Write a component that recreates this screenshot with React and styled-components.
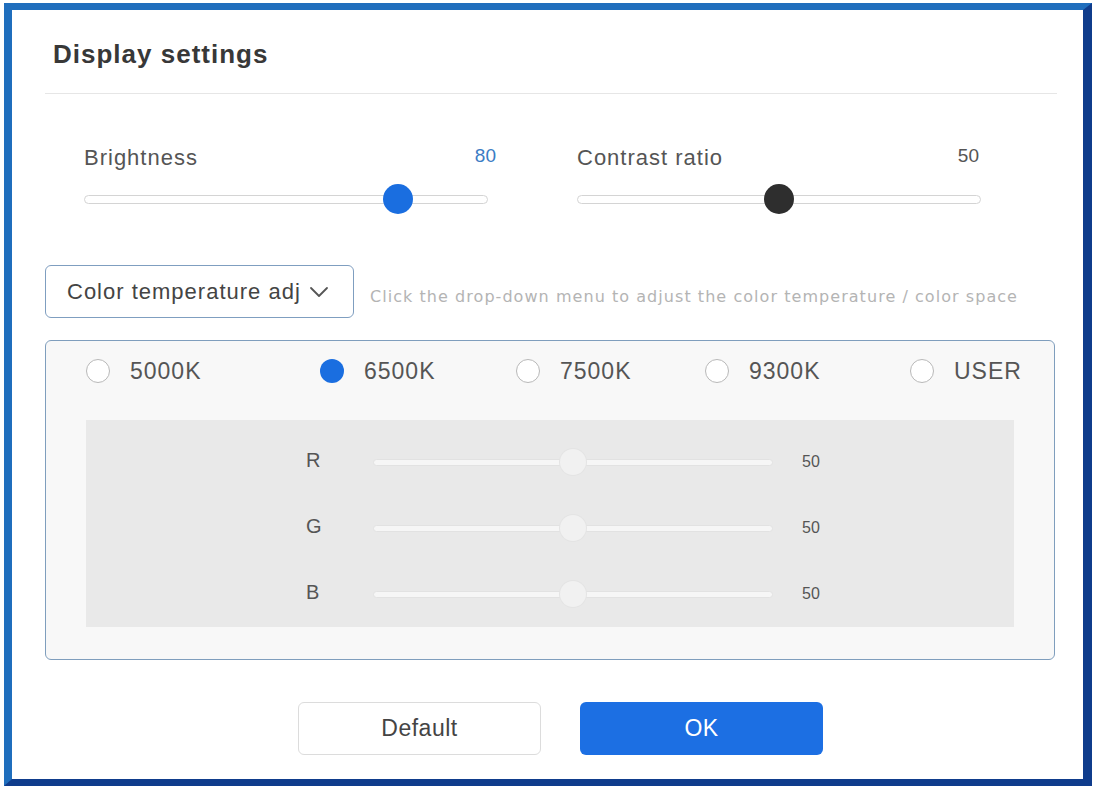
import styled, { createGlobalStyle } from 'styled-components';

const Global = createGlobalStyle`
  html, body {
    margin:0;
    padding:0;
    background:#fff;
  }
  body{
    font-family:"Liberation Sans", Arial, sans-serif;
    color:#555;
  }
`;

const Window = styled.div`
  box-sizing:border-box;
  width:1088px;
  height:783px;
  margin:3px 0 0 4px;
  border-style:solid;
  border-width:7px 9px 7px 8px;
  border-color:#1f6ebd #0f3c8c #0f3c8c #1f6ebd;
  background:#fff;
  padding:0 27px 0 33px;
  display:flex;
  flex-direction:column;
`;

const Header = styled.div`
  padding:29px 0 24px 8px;
  border-bottom:1px solid #e6e6e6;
  margin-right:-1px;
`;

const Title = styled.h1`
  margin:0;
  font-size:26px;
  line-height:30px;
  letter-spacing:1px;
  font-weight:700;
  color:#383838;
`;

const SliderRow = styled.div`
  display:grid;
  grid-template-columns:404px 404px;
  column-gap:89px;
  padding-left:39px;
  margin-top:51px;
`;

const SliderBlock = styled.div`
  display:flex;
  flex-direction:column;
  gap:13px;
`;

const LabelLine = styled.div`
  display:flex;
  justify-content:space-between;
  align-items:center;
  height:26px;
`;

const Label = styled.span`
  font-size:22px;
  letter-spacing:1px;
  color:#555;
`;

const Value = styled.span`
  font-size:19px;
  color:${(p) => p.color || '#555'};
  margin-top:-4px;
  margin-right:${(p) => p.offset || 0}px;
`;

const Track = styled.div`
  position:relative;
  height:${(p) => p.size}px;
  display:flex;
  align-items:center;
`;

const Rail = styled.div`
  box-sizing:border-box;
  width:100%;
  height:${(p) => p.thick}px;
  border-radius:${(p) => p.thick / 2}px;
  background:${(p) => p.bg};
  border:1px solid ${(p) => p.line};
`;

const Thumb = styled.div`
  position:absolute;
  top:0;
  width:${(p) => p.size}px;
  height:${(p) => p.size}px;
  border-radius:50%;
  background:${(p) => p.color};
  box-shadow:${(p) => p.shadow || 'none'};
`;

const Slider = ({ value, size, thick, bg, line, thumb, shadow }) => (
  <Track size={size}>
    <Rail thick={thick} bg={bg} line={line} />
    <Thumb
      size={size}
      color={thumb}
      shadow={shadow}
      style={{ left: `calc(${value / 100} * (100% - ${size}px))` }}
    />
  </Track>
);

const SelectRow = styled.div`
  display:flex;
  align-items:center;
  gap:16px;
  margin-top:51px;
`;

const Dropdown = styled.div`
  box-sizing:border-box;
  width:309px;
  height:53px;
  border:1.5px solid #7f9ec0;
  border-radius:6px;
  display:flex;
  align-items:center;
  padding-left:21px;
  gap:8px;
  font-size:22px;
  letter-spacing:1px;
  color:#444;
`;

const Hint = styled.span`
  font-family:"DejaVu Sans", Verdana, sans-serif;
  font-size:16px;
  letter-spacing:1.05px;
  color:#b4b4b4;
  margin-top:9px;
  white-space:nowrap;
`;

const Panel = styled.div`
  box-sizing:border-box;
  width:1010px;
  height:320px;
  margin-top:22px;
  border:1.5px solid #7f9ebd;
  border-radius:6px;
  background:#f8f8f8;
  padding:10px 40px 0 40px;
  display:flex;
  flex-direction:column;
`;

const RadioRow = styled.div`
  display:grid;
  grid-template-columns:234px 196px 189px 205px auto;
  height:40px;
  align-items:center;
`;

const RadioItem = styled.label`
  display:flex;
  align-items:center;
  gap:20px;
  font-size:23px;
  letter-spacing:1px;
  color:#555;
`;

const RadioDot = styled.span`
  box-sizing:border-box;
  width:24px;
  height:24px;
  border-radius:50%;
  background:${(p) => (p.checked ? '#1a6ee0' : '#fff')};
  border:${(p) => (p.checked ? 'none' : '1.5px solid #b8b8b8')};
`;

const ChannelBox = styled.div`
  margin-top:29px;
  height:207px;
  background:#e9e9e9;
  padding:9px 0 0 220px;
  box-sizing:border-box;
`;

const ChannelRow = styled.div`
  display:grid;
  grid-template-columns:67px 400px auto;
  align-items:center;
  height:66px;
`;

const ChannelName = styled.span`
  font-size:20px;
  color:#555;
  margin-top:-4px;
`;

const ChannelValue = styled.span`
  font-size:16px;
  color:#555;
  margin-left:29px;
`;

const Buttons = styled.div`
  display:flex;
  justify-content:center;
  gap:39px;
  margin-top:42px;
  padding-left:20px;
`;

const Button = styled.button`
  box-sizing:border-box;
  width:243px;
  height:53px;
  border-radius:6px;
  font-family:"Liberation Sans", Arial, sans-serif;
  font-size:23px;
  letter-spacing:0.5px;
  background:${(p) => (p.primary ? '#1c6fe3' : '#fff')};
  color:${(p) => (p.primary ? '#fff' : '#444')};
  border:${(p) => (p.primary ? 'none' : '1.5px solid #dcdcdc')};
`;

const Chevron = () => (
  <svg width="20" height="12" viewBox="0 0 20 12" fill="none">
    <path d="M2 2 L10 10 L18 2" stroke="#555" strokeWidth="1.8" strokeLinecap="round" strokeLinejoin="round" />
  </svg>
);

const temps = ['5000K', '6500K', '7500K', '9300K', 'USER'];
const channels = ['R', 'G', 'B'];

const App = () => {
  return (
    <>
      <Global />
      <Window>
        <Header>
          <Title>Display settings</Title>
        </Header>

        <SliderRow>
          <SliderBlock>
            <LabelLine>
              <Label>Brightness</Label>
              <Value color="#3b7cc4" offset={-8}>80</Value>
            </LabelLine>
            <Slider value={80} size={30} thick={9} bg="#fff" line="#d4d4d4" thumb="#1a6ee0" />
          </SliderBlock>
          <SliderBlock>
            <LabelLine>
              <Label>Contrast ratio</Label>
              <Value offset={2}>50</Value>
            </LabelLine>
            <Slider value={50} size={30} thick={9} bg="#fff" line="#d4d4d4" thumb="#2e2e2e" />
          </SliderBlock>
        </SliderRow>

        <SelectRow>
          <Dropdown>
            Color temperature adj
            <Chevron />
          </Dropdown>
          <Hint>Click the drop-down menu to adjust the color temperature / color space</Hint>
        </SelectRow>

        <Panel>
          <RadioRow>
            {temps.map((t) => (
              <RadioItem key={t}>
                <RadioDot checked={t === '6500K'} />
                {t}
              </RadioItem>
            ))}
          </RadioRow>
          <ChannelBox>
            {channels.map((c) => (
              <ChannelRow key={c}>
                <ChannelName>{c}</ChannelName>
                <Slider
                  value={50}
                  size={26}
                  thick={7}
                  bg="#f6f6f6"
                  line="#e2e2e2"
                  thumb="#f1f1f1"
                  shadow="0 0 0 1px #e4e4e4"
                />
                <ChannelValue>50</ChannelValue>
              </ChannelRow>
            ))}
          </ChannelBox>
        </Panel>

        <Buttons>
          <Button>Default</Button>
          <Button primary>OK</Button>
        </Buttons>
      </Window>
    </>
  );
};

export default App;
